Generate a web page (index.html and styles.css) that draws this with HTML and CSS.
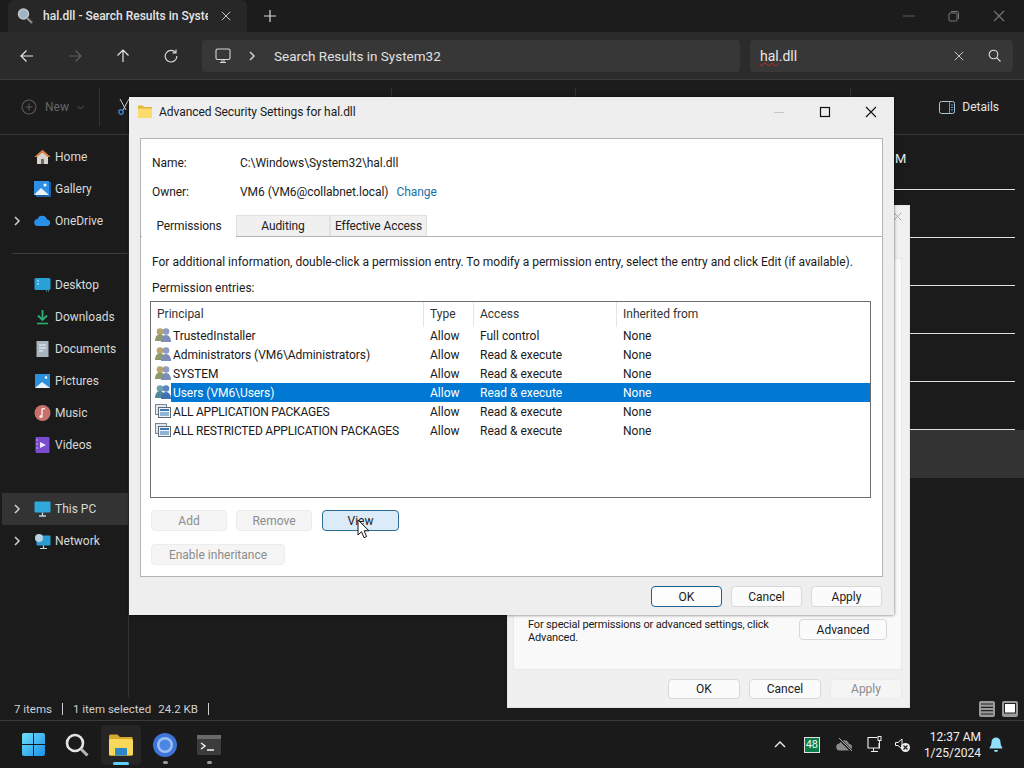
FILE: index.html
```html
<!DOCTYPE html>
<html lang="en">
<head>
  <meta charset="UTF-8">
  <title>hal.dll - Search Results in System32</title>
  <link rel="stylesheet" href="styles.css">
</head>
<body>
  <svg class="defs" width="0" height="0">
    <symbol id="people" viewBox="0 0 16 16">
      <circle cx="5" cy="4.500" r="3.300" fill="#b9a36c"/>
      <path d="M0 14c0-4 2-7 5-7s5 3 5 7z" fill="#8f9a6a"/>
      <circle cx="11" cy="4.500" r="3.300" fill="#8d9cc0"/>
      <path d="M6 15c0-4 2-7 5-7s5 3 5 7z" fill="#7c8db8"/>
    </symbol>
    <symbol id="people-sel" viewBox="0 0 16 16">
      <circle cx="5" cy="4.500" r="3.300" fill="#6fa0b0"/>
      <path d="M0 14c0-4 2-7 5-7s5 3 5 7z" fill="#4f8a9a"/>
      <circle cx="11" cy="4.500" r="3.300" fill="#5a86c0"/>
      <path d="M6 15c0-4 2-7 5-7s5 3 5 7z" fill="#3f70b0"/>
    </symbol>
    <symbol id="package" viewBox="0 0 16 16">
      <rect x="0.500" y="1.500" width="11" height="10" fill="#dfe6ee" stroke="#7a8794"/>
      <rect x="3.500" y="4.500" width="12" height="10" fill="#f2f5f8" stroke="#5d6b78"/>
      <rect x="5" y="6" width="9" height="2" fill="#3d78b0"/>
      <rect x="5" y="9" width="9" height="4" fill="#8fb4d4"/>
    </symbol>
    <symbol id="chev" viewBox="0 0 10 10">
      <path d="M3 1l4 4-4 4" fill="none" stroke="#d0d0d0" stroke-width="1.500"/>
    </symbol>
    <symbol id="cross" viewBox="0 0 12 12">
      <path d="M1 1l10 10M11 1L1 11" fill="none" stroke="currentColor" stroke-width="1.100"/>
    </symbol>
  </svg>

  <div class="explorer">
    <!-- tabs -->
    <div class="titlebar">
      <div class="tab">
        <svg class="tab-icon" width="18" height="18" viewBox="0 0 18 18"><circle cx="7.500" cy="7" r="5" fill="#9fb4c4" stroke="#c8c8c8" stroke-width="1.500"/><path d="M11 11l5 5" stroke="#8a8a8a" stroke-width="2.400"/></svg>
        <span class="tab-title">hal.dll - Search Results in System32</span>
        <svg class="tab-x" width="10" height="10"><use href="#cross"/></svg>
      </div>
      <svg class="tab-add" width="12" height="12" viewBox="0 0 12 12"><path d="M6 0v12M0 6h12" stroke="#d8d8d8" stroke-width="1.200"/></svg>
      <div class="win-btns">
        <svg width="12" height="12" viewBox="0 0 12 12"><path d="M0 6h12" stroke="#5c5c5c"/></svg>
        <svg width="12" height="12" viewBox="0 0 12 12"><path d="M3 1.500h6.500a1 1 0 0 1 1 1V9" fill="none" stroke="#777"/><rect x="1" y="3" width="8" height="8" rx="1" fill="none" stroke="#777"/></svg>
        <svg width="12" height="12" class="dim-x"><use href="#cross"/></svg>
      </div>
    </div>

    <!-- address row -->
    <div class="navbar">
      <div class="nav-btns">
        <svg width="14" height="14" viewBox="0 0 14 14"><path d="M13 7H1M6.500 1.500L1 7l5.500 5.500" fill="none" stroke="#e8e8e8" stroke-width="1.200"/></svg>
        <svg width="14" height="14" viewBox="0 0 14 14"><path d="M1 7h12M7.500 1.500L13 7l-5.500 5.500" fill="none" stroke="#5e5e5e" stroke-width="1.200"/></svg>
        <svg width="14" height="14" viewBox="0 0 14 14"><path d="M7 13V1M1.500 6.500L7 1l5.500 5.500" fill="none" stroke="#e8e8e8" stroke-width="1.200"/></svg>
        <svg width="14" height="14" viewBox="0 0 14 14"><path d="M11.500 3.500A5.800 5.800 0 1 0 12.800 7" fill="none" stroke="#d8d8d8" stroke-width="1.200"/><path d="M8.500 3.800h3.500V0.500" fill="none" stroke="#d8d8d8" stroke-width="1.200"/></svg>
      </div>
      <div class="address">
        <svg width="16" height="16" viewBox="0 0 16 16"><rect x="1" y="1" width="14" height="10.500" rx="1.500" fill="none" stroke="#d8d8d8" stroke-width="1.100"/><path d="M5 14.500h6M7 11.500v3M9 11.500v3" stroke="#d8d8d8"/></svg>
        <svg class="addr-chev" width="10" height="10"><use href="#chev"/></svg>
        <span>Search Results in System32</span>
      </div>
      <div class="search">
        <span class="search-text"><span class="squiggle">hal</span>.dll</span>
        <svg class="search-x" width="10" height="10"><use href="#cross"/></svg>
        <svg width="13" height="13" viewBox="0 0 13 13"><circle cx="5.500" cy="5.500" r="4.300" fill="none" stroke="#e0e0e0" stroke-width="1.100"/><path d="M8.600 8.600L12.500 12.500" stroke="#e0e0e0" stroke-width="1.100"/></svg>
      </div>
    </div>

    <!-- command bar -->
    <div class="toolbar">
      <div class="new-btn">
        <svg width="16" height="16" viewBox="0 0 16 16"><circle cx="8" cy="8" r="7" fill="none" stroke="#5a5a5a" stroke-width="1.100"/><path d="M8 4.500v7M4.500 8h7" stroke="#5a5a5a" stroke-width="1.100"/></svg>
        <span>New</span>
        <svg width="7" height="5" viewBox="0 0 7 5"><path d="M0.500 1L3.500 4l3-3" fill="none" stroke="#5a5a5a"/></svg>
      </div>
      <div class="tb-sep"></div>
      <svg class="scissors" width="12" height="18" viewBox="0 0 12 18"><path d="M2 1l6 11M11 1L5 12" stroke="#cfcfcf" stroke-width="1"/><circle cx="3" cy="14" r="2.200" fill="none" stroke="#3f86c8" stroke-width="1.400"/></svg>
      <div class="tb-sep sep-a"></div>
      <div class="tb-sep sep-b"></div>
      <div class="tb-sep sep-c"></div>
      <div class="details">
        <svg width="16" height="13" viewBox="0 0 16 13"><rect x="0.500" y="0.500" width="15" height="12" rx="2" fill="none" stroke="#a8c8dc"/><path d="M10.500 0.500v12" stroke="#4aa8e0"/><path d="M12 4h2M12 6.500h2M12 9h2" stroke="#4aa8e0"/></svg>
        <span>Details</span>
      </div>
    </div>

    <div class="main">
      <div class="sidebar">
        <div class="side-row"><span class="side-chev"></span>
          <svg width="17" height="16" viewBox="0 0 17 16"><path d="M8.500 1L0.500 8H3v7h11V8h2.500z" fill="#d8d4cc"/><path d="M8.500 1L0.500 8h2.500L8.500 3.500 14 8h2.500z" fill="#d87a3a"/><rect x="7" y="10" width="3" height="5" fill="#6a6a6a"/></svg>
          <span>Home</span></div>
        <div class="side-row"><span class="side-chev"></span>
          <svg width="17" height="16" viewBox="0 0 17 16"><rect x="2" y="1" width="15" height="15" fill="#1d5fa8"/><rect x="0" y="0" width="15" height="14" fill="#2f8fe6"/><path d="M0 14l7-7 8 7z" fill="#e8f2fa"/><circle cx="11" cy="4" r="1.500" fill="#fff"/></svg>
          <span>Gallery</span></div>
        <div class="side-row"><svg class="side-chev" width="10" height="10"><use href="#chev"/></svg>
          <svg width="17" height="16" viewBox="0 0 17 16"><path d="M4 13a3.500 3.500 0 0 1-.5-7 5 5 0 0 1 9.500 0.500 3.300 3.300 0 0 1 .5 6.500z" fill="#2a8fe8"/></svg>
          <span>OneDrive</span></div>
        <div class="side-div"></div>
        <div class="side-row"><span class="side-chev"></span>
          <svg width="17" height="16" viewBox="0 0 17 16"><rect x="0.500" y="1" width="16" height="12" rx="1.500" fill="#29a0d8"/><path d="M3 4h2M3 7h2" stroke="#e0f4ff" stroke-width="1.200"/><path d="M12 14h4" stroke="#8fb0c0" stroke-dasharray="1 1"/></svg>
          <span>Desktop</span></div>
        <div class="side-row"><span class="side-chev"></span>
          <svg width="17" height="16" viewBox="0 0 17 16"><path d="M8.500 1v9M4 6.500L8.500 11 13 6.500" fill="none" stroke="#2fae74" stroke-width="1.800"/><path d="M3 14.500h11" stroke="#2fae74" stroke-width="1.600"/></svg>
          <span>Downloads</span></div>
        <div class="side-row"><span class="side-chev"></span>
          <svg width="17" height="16" viewBox="0 0 17 16"><rect x="2.500" y="0" width="12" height="16" fill="#a8b4c0"/><path d="M5 4h7M5 7h7M5 10h4" stroke="#f0f4f8" stroke-width="1.200"/></svg>
          <span>Documents</span></div>
        <div class="side-row"><span class="side-chev"></span>
          <svg width="17" height="16" viewBox="0 0 17 16"><rect x="1" y="1" width="15" height="14" fill="#2c8fdc"/><path d="M1 15l7-6 8 6z" fill="#e8f2fa"/><circle cx="12" cy="4.500" r="1.300" fill="#fff"/></svg>
          <span>Pictures</span></div>
        <div class="side-row"><span class="side-chev"></span>
          <svg width="17" height="16" viewBox="0 0 17 16"><circle cx="8.500" cy="8" r="8" fill="#c9706c"/><path d="M8 12V4l3-0.500" fill="none" stroke="#f8e8e8" stroke-width="1.400"/><circle cx="6.800" cy="11.500" r="1.500" fill="#f8e8e8"/></svg>
          <span>Music</span></div>
        <div class="side-row"><span class="side-chev"></span>
          <svg width="17" height="16" viewBox="0 0 17 16"><rect x="1.500" y="0" width="14" height="16" rx="1" fill="#7a4ad0"/><path d="M6 5l6 3-6 3z" fill="#f0e8ff"/><path d="M3 2v12" stroke="#c8b0f0" stroke-dasharray="2 2"/></svg>
          <span>Videos</span></div>
        <div class="side-div side-div-blank"></div>
        <div class="side-row side-sel"><svg class="side-chev" width="10" height="10"><use href="#chev"/></svg>
          <svg width="17" height="16" viewBox="0 0 17 16"><rect x="0.500" y="0.500" width="16" height="11" rx="1" fill="#30a8dc"/><path d="M8.500 11.500v3M5 15h7" stroke="#c0d8e4" stroke-width="1.300"/></svg>
          <span>This PC</span></div>
        <div class="side-row"><svg class="side-chev" width="10" height="10"><use href="#chev"/></svg>
          <svg width="17" height="16" viewBox="0 0 17 16"><rect x="2.500" y="2.500" width="14" height="10" rx="1" fill="#2c9cd4"/><circle cx="5" cy="5" r="4" fill="#b8d4e4"/><path d="M9.500 12.500v2.500M6 15.500h7" stroke="#c0d8e4" stroke-width="1.200"/></svg>
          <span>Network</span></div>
      </div>

      <!-- only the tail of the file rows shows beside the dialogs -->
      <div class="files">
        <div class="file-row"><span class="file-date">M</span></div>
        <div class="file-row"></div>
        <div class="file-row"></div>
        <div class="file-row"></div>
        <div class="file-row"></div>
        <div class="file-row"></div>
        <div class="file-row file-sel"></div>
      </div>
    </div>

    <div class="statusbar">
      <span>7 items</span><span class="bar"></span>
      <span>1 item selected</span><span class="size">24.2 KB</span><span class="bar"></span>
      <div class="views">
        <svg width="16" height="16" viewBox="0 0 16 16"><rect width="16" height="16" rx="2" fill="#9a9a9a"/><path d="M2 3h12M2 6.300h12M2 9.600h12M2 13h12" stroke="#222" stroke-width="1.200"/></svg>
        <svg width="16" height="16" viewBox="0 0 16 16"><rect width="16" height="16" rx="2" fill="#9a9a9a"/><rect x="2.500" y="2.500" width="11" height="9.500" fill="#fff" stroke="#222"/></svg>
      </div>
    </div>

    <div class="taskbar">
      <div class="task-icons">
        <div class="task-item">
          <svg width="23" height="23" viewBox="0 0 24 24"><defs><linearGradient id="win" x1="0" y1="0" x2="1" y2="1"><stop offset="0" stop-color="#6fe0f8"/><stop offset="1" stop-color="#1a90e8"/></linearGradient></defs><path fill="url(#win)" d="M0 2a2 2 0 0 1 2-2h9.500v11.500H0zM12.500 0H22a2 2 0 0 1 2 2v9.500H12.500zM0 12.500h11.500V24H2a2 2 0 0 1-2-2zM12.500 12.500H24V22a2 2 0 0 1-2 2h-9.500z"/></svg>
        </div>
        <div class="task-item">
          <svg width="24" height="24" viewBox="0 0 24 24"><circle cx="10" cy="10" r="8" fill="none" stroke="#e4e4e4" stroke-width="2.600"/><path d="M16 16l6.500 6.500" stroke="#b8b8b8" stroke-width="3"/></svg>
        </div>
        <div class="task-item task-active">
          <svg width="26" height="24" viewBox="0 0 26 24"><path d="M1 3a1.500 1.500 0 0 1 1.500-1.500h7L12 4h12.500v17a1.500 1.500 0 0 1-1.500 1.500H2.500A1.500 1.500 0 0 1 1 21z" fill="#d8a82c"/><rect x="1" y="6" width="24" height="16.500" rx="1.500" fill="#f8d858"/><rect x="7" y="15" width="12" height="7.500" rx="1" fill="#2a88c8"/></svg>
          <span class="task-pill"></span>
        </div>
        <div class="task-item">
          <svg width="24" height="24" viewBox="0 0 24 24"><circle cx="12" cy="12" r="12" fill="#3f74d8"/><circle cx="12" cy="12" r="8" fill="#9cc0f4"/><circle cx="12" cy="12" r="5.500" fill="#4a86e4"/></svg>
          <span class="task-dot"></span>
        </div>
        <div class="task-item">
          <svg width="24" height="20" viewBox="0 0 24 20"><rect width="24" height="20" rx="1.500" fill="#3c3c3c"/><rect width="24" height="4" fill="#6a6a6a"/><path d="M4 8l4 3-4 3" fill="none" stroke="#f0f0f0" stroke-width="1.500"/><path d="M10 15h7" stroke="#f0f0f0" stroke-width="1.500"/></svg>
          <span class="task-dot"></span>
        </div>
      </div>
      <div class="tray">
        <svg class="tray-chev" width="12" height="7" viewBox="0 0 12 7"><path d="M1 6l5-5 5 5" fill="none" stroke="#f0f0f0" stroke-width="1.400"/></svg>
        <span class="tray-temp">48</span>
        <svg width="17" height="14" viewBox="0 0 17 14"><path d="M4 12.500a3.500 3.500 0 0 1-.5-7 5 5 0 0 1 9.500 0.500 3.300 3.300 0 0 1 .5 6.500z" fill="#8a8a8a"/><path d="M3 0.500l13 13" stroke="#1a1a1a" stroke-width="2.500"/><path d="M3 0l13 13" stroke="#b0b0b0" stroke-width="1"/></svg>
        <svg class="tray-net" width="16" height="17" viewBox="0 0 16 17"><path d="M10 1.500H1v10.500h11V7" fill="none" stroke="#f0f0f0" stroke-width="1.100"/><path d="M4 15.500h7M6.500 12v3.500" stroke="#f0f0f0"/><rect x="11" y="0.500" width="3" height="4" fill="none" stroke="#f0f0f0"/><path d="M12.500 4.500v8" stroke="#f0f0f0"/></svg>
        <svg width="15" height="14" viewBox="0 0 15 14"><path d="M0.500 4.500h2.500L7 1v10L3 7.500H0.500z" fill="none" stroke="#f0f0f0"/><circle cx="10.500" cy="9.500" r="4.500" fill="#f0f0f0"/><path d="M8.500 7.500l4 4M12.500 7.500l-4 4" stroke="#1a1a1a" stroke-width="1.200"/></svg>
        <div class="clock"><div>12:37 AM</div><div>1/25/2024</div></div>
        <svg width="14" height="16" viewBox="0 0 14 16"><path d="M7 0.500a4.500 4.500 0 0 1 4.500 4.500c0 4 2 5 2 6.500H0.500c0-1.500 2-2.500 2-6.500A4.500 4.500 0 0 1 7 0.500z" fill="#8fe0f8"/><path d="M5 13h4a2 2 0 0 1-4 0z" fill="#8fe0f8"/></svg>
      </div>
    </div>
  </div>

  <!-- properties dialog, behind -->
  <div class="window props">
    <svg class="props-x" width="9" height="9"><use href="#cross"/></svg>
    <div class="props-panel">
      <div class="props-adv">
        <p>For special permissions or advanced settings, click Advanced.</p>
        <button class="btn adv-btn">Advanced</button>
      </div>
    </div>
    <div class="props-foot">
      <button class="btn foot-btn">OK</button>
      <button class="btn foot-btn">Cancel</button>
      <button class="btn foot-btn btn-off">Apply</button>
    </div>
  </div>

  <!-- advanced security dialog -->
  <div class="window adv">
    <div class="adv-title">
      <svg width="14" height="13" viewBox="0 0 14 13"><path d="M0 1.500A1 1 0 0 1 1 .5h3.500L6 2h8v10a1 1 0 0 1-1 1H1a1 1 0 0 1-1-1z" fill="#e0b83c"/><rect y="3.500" width="14" height="9.500" rx="1" fill="#fbdc6c"/></svg>
      <span class="adv-name">Advanced Security Settings for hal.dll</span>
      <div class="adv-ctrls">
        <svg width="12" height="12" viewBox="0 0 12 12"><path d="M1 6.500h10" stroke="#c4c4c4"/></svg>
        <svg width="12" height="12" viewBox="0 0 12 12"><rect x="1.500" y="1.500" width="9" height="9" fill="none" stroke="#111" stroke-width="1.200"/></svg>
        <svg class="adv-x" width="12" height="12"><use href="#cross"/></svg>
      </div>
    </div>

    <div class="adv-panel">
      <div class="info">
        <div class="info-row"><span class="info-label">Name:</span><span>C:\Windows\System32\hal.dll</span></div>
        <div class="info-row"><span class="info-label">Owner:</span><span>VM6 (VM6@collabnet.local)</span><a class="change">Change</a></div>
      </div>
      <div class="tabs">
        <div class="dtab dtab-on">Permissions</div>
        <div class="dtab">Auditing</div>
        <div class="dtab dtab-eff">Effective Access</div>
      </div>
      <div class="perm">
        <p class="perm-note">For additional information, double-click a permission entry. To modify a permission entry, select the entry and click Edit (if available).</p>
        <p class="perm-note">Permission entries:</p>

        <div class="table">
          <div class="t-row t-head">
            <div class="cell">Principal</div><div class="cell">Type</div><div class="cell">Access</div><div class="cell">Inherited from</div>
          </div>
          <div class="t-row">
            <div class="cell principal"><svg width="16" height="16"><use href="#people"/></svg><span class="p-name">TrustedInstaller</span></div>
            <div class="cell">Allow</div><div class="cell">Full control</div><div class="cell">None</div>
          </div>
          <div class="t-row">
            <div class="cell principal"><svg width="16" height="16"><use href="#people"/></svg><span class="p-name">Administrators (VM6\Administrators)</span></div>
            <div class="cell">Allow</div><div class="cell">Read &amp; execute</div><div class="cell">None</div>
          </div>
          <div class="t-row">
            <div class="cell principal"><svg width="16" height="16"><use href="#people"/></svg><span class="p-name">SYSTEM</span></div>
            <div class="cell">Allow</div><div class="cell">Read &amp; execute</div><div class="cell">None</div>
          </div>
          <div class="t-row t-sel">
            <div class="cell principal"><svg width="16" height="16"><use href="#people-sel"/></svg><span class="p-name">Users (VM6\Users)</span></div>
            <div class="cell">Allow</div><div class="cell">Read &amp; execute</div><div class="cell">None</div>
          </div>
          <div class="t-row">
            <div class="cell principal"><svg width="16" height="16"><use href="#package"/></svg><span class="p-name p-caps">ALL APPLICATION PACKAGES</span></div>
            <div class="cell">Allow</div><div class="cell">Read &amp; execute</div><div class="cell">None</div>
          </div>
          <div class="t-row">
            <div class="cell principal"><svg width="16" height="16"><use href="#package"/></svg><span class="p-name p-caps">ALL RESTRICTED APPLICATION PACKAGES</span></div>
            <div class="cell">Allow</div><div class="cell">Read &amp; execute</div><div class="cell">None</div>
          </div>
        </div>

        <div class="perm-btns">
          <button class="btn btn-off perm-btn">Add</button>
          <button class="btn btn-off perm-btn">Remove</button>
          <button class="btn btn-hover perm-btn view-btn">View</button>
        </div>
        <button class="btn btn-off inherit-btn">Enable inheritance</button>
      </div>
    </div>

    <div class="adv-foot">
      <button class="btn ok-btn btn-focus">OK</button>
      <button class="btn ok-btn">Cancel</button>
      <button class="btn ok-btn">Apply</button>
    </div>
  </div>

  <!-- mouse pointer -->
  <svg class="pointer" width="14" height="20" viewBox="0 0 14 20"><path d="M1 1v15l3.500-3.300 2.500 6 2.600-1.100-2.500-5.800H12z" fill="#fff" stroke="#111" stroke-width="1"/></svg>
</body>
</html>
```

FILE: styles.css
```css
body {
  margin: 0;
  width: 1024px;
  height: 768px;
  overflow: hidden;
  position: relative;
  background-color: #1b1b1b;
  color: #e8e8e8;
  font-family: Roboto, "Liberation Sans", sans-serif;
  font-size: 12px;
}

p { margin: 0; }

svg { display: block; flex: none; }

.defs { position: absolute; }

.explorer {
  display: flex;
  flex-direction: column;
  height: 768px;
}

/* tabs */
.titlebar {
  display: flex;
  align-items: center;
  height: 32px;
  flex: none;
  background-color: #1c1c1c;
  padding-left: 8px;
}

.tab {
  display: flex;
  align-items: center;
  width: 239px;
  height: 32px;
  box-sizing: border-box;
  padding-left: 8px;
  background-color: #272727;
  border-radius: 6px 6px 0 0;
}

.tab-icon { margin-right: 9px; }

.tab-title {
  width: 165px;
  overflow: hidden;
  white-space: nowrap;
  font-size: 12px;
  font-weight: 500;
  color: #e4e4e4;
}

.tab-x { margin-left: 13px; color: #d8d8d8; }

.tab-add { margin-left: 17px; }

.win-btns {
  display: flex;
  gap: 33px;
  margin-left: auto;
  margin-right: 19px;
}

.dim-x { color: #777; }

/* address row */
.navbar {
  display: flex;
  align-items: center;
  height: 48px;
  flex: none;
  background-color: #2b2b2b;
  border-bottom: 1px solid #3a3a3a;
  box-sizing: border-box;
}

.nav-btns {
  display: flex;
  gap: 34px;
  margin-left: 20px;
  width: 182px;
}

.address {
  display: flex;
  align-items: center;
  width: 538px;
  height: 32px;
  box-sizing: border-box;
  padding-left: 13px;
  background-color: #373737;
  border-radius: 4px;
  font-size: 13.500px;
  color: #e0e0e0;
}

.addr-chev { margin: 0 17px 0 16px; }

.search {
  display: flex;
  align-items: center;
  width: 263px;
  height: 32px;
  margin-left: 10px;
  box-sizing: border-box;
  padding: 0 12px 0 10px;
  background-color: #373737;
  border-radius: 4px;
  font-size: 14px;
  color: #e8e8e8;
}

.search-text { flex: 1; }

.squiggle { text-decoration: underline wavy #c8282c 1px; }

.search-x { color: #d8d8d8; margin-right: 24px; }

/* command bar */
.toolbar {
  display: flex;
  align-items: center;
  height: 55px;
  flex: none;
  padding-left: 21px;
  box-sizing: border-box;
  background-color: #1c1c1c;
  border-bottom: 1px solid #3a3a3a;
}

.new-btn {
  display: flex;
  align-items: center;
  gap: 8px;
  color: #666;
}

.tb-sep {
  width: 1px;
  height: 38px;
  background-color: #333;
  margin-left: 15px;
}

.scissors { margin-left: 18px; }

.sep-a { margin-left: 261px; }

.sep-b { margin-left: 183px; }

.sep-c { margin-left: 274px; }

.details {
  display: flex;
  align-items: center;
  gap: 7px;
  margin-left: auto;
  margin-right: 25px;
  color: #e4e4e4;
}

/* sidebar and files */
.main {
  display: flex;
  flex: 1;
  min-height: 0;
}

.sidebar {
  width: 128px;
  flex: none;
  padding-top: 6px;
  border-right: 1px solid #333;
}

.side-row {
  display: flex;
  align-items: center;
  height: 32px;
  padding-left: 12px;
  color: #d8d8d8;
}

.side-row > span:last-child { margin-left: 4px; }

.side-chev { width: 10px; height: 10px; margin-right: 12px; }

.side-sel {
  background-color: #333;
  margin-left: 2px;
  padding-left: 10px;
}

.side-div {
  height: 1px;
  background-color: #3c3c3c;
  margin: 16px 0 15px 12px;
}

.side-div-blank { background-color: transparent; }

.files {
  flex: 1;
  padding-top: 7px;
  min-width: 0;
}

.file-row {
  height: 47px;
  margin-right: 9px;
  border-bottom: 1px solid #e0e0e0;
}

.file-date {
  display: block;
  margin-left: 766px;
  padding-top: 9px;
  font-size: 13px;
  color: #e8e8e8;
}

.file-sel {
  height: 48px;
  margin-right: 0;
  border-bottom: 0;
  background-color: #333;
}

/* status bar */
.statusbar {
  display: flex;
  align-items: center;
  height: 23px;
  flex: none;
  padding: 0 6px 0 14px;
  font-size: 11.500px;
  color: #cfcfcf;
}

.bar {
  width: 1px;
  height: 12px;
  background-color: #cfcfcf;
  margin: 0 10px;
}

.size { margin-left: 7px; }

.views {
  display: flex;
  gap: 7px;
  margin-left: auto;
}

/* taskbar */
.taskbar {
  display: flex;
  align-items: center;
  justify-content: space-between;
  height: 48px;
  flex: none;
  box-sizing: border-box;
  padding: 0 21px 0 13px;
  background-color: #1a1a1a;
  border-top: 1px solid #3a3a3a;
}

.task-icons {
  display: flex;
  gap: 4px;
}

.task-item {
  position: relative;
  display: flex;
  align-items: center;
  justify-content: center;
  width: 40px;
  height: 40px;
}

.task-active {
  background-color: #252525;
  border-radius: 4px;
}

.task-pill {
  position: absolute;
  bottom: 0;
  left: 12px;
  width: 16px;
  height: 3px;
  border-radius: 2px;
  background-color: #60cdff;
}

.task-dot {
  position: absolute;
  bottom: 1px;
  left: 18px;
  width: 5px;
  height: 3px;
  border-radius: 2px;
  background-color: #9a9a9a;
}

.tray {
  display: flex;
  align-items: center;
  gap: 14px;
  color: #f0f0f0;
}

.tray-chev { margin-right: 4px; }

.tray-temp {
  width: 14px;
  height: 14px;
  margin-right: 2px;
  border: 1px solid #e0e0e0;
  background-color: #0f7a4a;
  text-align: center;
  line-height: 14px;
  font-size: 11px;
  color: #e8f8f0;
}

.tray-net { margin-right: -2px; }

.clock {
  text-align: right;
  line-height: 16px;
  margin-right: -6px;
}

/* dialogs */
.window {
  position: absolute;
  box-sizing: border-box;
  color: #1a1a1a;
}

.btn {
  display: block;
  box-sizing: border-box;
  padding: 0;
  font-family: inherit;
  font-size: 12px;
  color: #1a1a1a;
  background-color: #fbfbfb;
  border: 1px solid #d8d8d8;
  border-radius: 4px;
}

.btn-off {
  color: #8c8c8c;
  background-color: #f5f5f5;
  border-color: #ececec;
}

.btn-hover {
  background-color: #dcebf8;
  border-color: #2c6c94;
}

.btn-focus {
  border-color: #1c6090;
  background-color: #fdfdfd;
}

/* properties dialog */
.props {
  left: 507px;
  top: 205px;
  width: 403px;
  height: 503px;
  display: flex;
  flex-direction: column;
  background-color: #f0f0f0;
  border: 1px solid #e4e4e4;
}

.props-x {
  position: absolute;
  top: 6px;
  left: 385px;
  color: #9a9a9a;
}

.props-panel {
  flex: 1;
  margin: 52px 7px 0 5px;
  background-color: #f9f9f9;
  border: 1px solid #e8e8e8;
  display: flex;
  flex-direction: column;
  justify-content: flex-end;
}

.props-adv {
  display: flex;
  justify-content: space-between;
  padding: 0 14px 25px 14px;
}

.props-adv p {
  width: 245px;
  margin-top: -1px;
  font-size: 11px;
  line-height: 13px;
  letter-spacing: -0.150px;
}

.adv-btn { width: 88px; height: 21px; }

.props-foot {
  display: flex;
  justify-content: flex-end;
  gap: 9px;
  padding: 9px 7px 8px 0;
}

.foot-btn { width: 72px; height: 20px; }

/* advanced security dialog */
.adv {
  left: 129px;
  top: 97px;
  width: 765px;
  height: 518px;
  display: flex;
  flex-direction: column;
  background-color: #eeeeee;
  box-shadow: 0 0 3px rgba(0, 0, 0, 0.6);
}

.adv-title {
  display: flex;
  align-items: center;
  height: 29px;
  padding: 0 17px 12px 9px;
  flex: none;
}

.adv-name { margin-left: 7px; letter-spacing: -0.050px; }

.adv-ctrls {
  display: flex;
  gap: 34px;
  margin-left: auto;
}

.adv-x { color: #111; }

.adv-panel {
  flex: none;
  height: 439px;
  box-sizing: border-box;
  margin: 0 11px 0 11px;
  background-color: #fff;
  border: 1px solid #b4b4b4;
}

.info { padding: 14px 11px 0; letter-spacing: -0.050px; }

.info-row {
  display: flex;
  align-items: center;
  height: 20px;
  margin-bottom: 9px;
}

.info-label { width: 88px; }

.change { margin-left: 8px; color: #1a6fa8; }

.tabs {
  display: flex;
  margin-top: 13px;
  padding-left: 1px;
  height: 22px;
  box-sizing: border-box;
  border-bottom: 1px solid #b4b4b4;
}

.dtab {
  width: 94px;
  height: 21px;
  line-height: 21px;
  text-align: center;
  letter-spacing: -0.100px;
  background-color: #f0f0f0;
  border: 1px solid #e0e0e0;
  border-bottom: 0;
  box-sizing: border-box;
  color: #222;
}

.dtab-on {
  height: 22px;
  background-color: #fff;
  border-color: #fff;
}

.dtab-eff { width: 97px; }

.perm { padding: 15px 9px 0; }

.perm-note {
  height: 20px;
  line-height: 20px;
  margin-bottom: 6px;
  padding-left: 2px;
  white-space: nowrap;
}

.table {
  width: 721px;
  height: 197px;
  box-sizing: border-box;
  margin-top: -3px;
  border: 1px solid #6e6e6e;
}

.t-row {
  display: grid;
  grid-template-columns: 273px 50px 143px 1fr;
  height: 19px;
}

.t-head {
  height: 24px;
  color: #333;
}

.t-head .cell {
  padding-top: 0;
  line-height: 25px;
  border-right: 1px solid #e4e4e4;
}

.t-head .cell:last-child { border-right: 0; }

.cell {
  box-sizing: border-box;
  padding: 2px 0 0 6px;
  line-height: 17px;
  white-space: nowrap;
}

.principal {
  display: flex;
  padding: 0 0 0 4px;
}

.principal svg { margin-top: 1px; }

.p-name {
  flex: 1;
  padding: 2px 0 0 2px;
  letter-spacing: -0.060px;
}

.p-caps { letter-spacing: -0.200px; }

.t-sel .cell:not(.principal),
.t-sel .p-name {
  background-color: #0078d4;
  color: #fff;
}

.perm-btns {
  display: flex;
  gap: 9px;
  margin: 12px 0 0 1px;
}

.perm-btn { width: 76px; height: 21px; }

.view-btn { width: 77px; margin-left: 1px; }

.inherit-btn {
  width: 134px;
  height: 21px;
  margin: 13px 0 0 1px;
}

.adv-foot {
  display: flex;
  justify-content: flex-end;
  gap: 9px;
  padding: 9px 12px 0 0;
}

.ok-btn { width: 71px; height: 21px; }

.pointer {
  position: absolute;
  left: 357px;
  top: 519px;
}
```
